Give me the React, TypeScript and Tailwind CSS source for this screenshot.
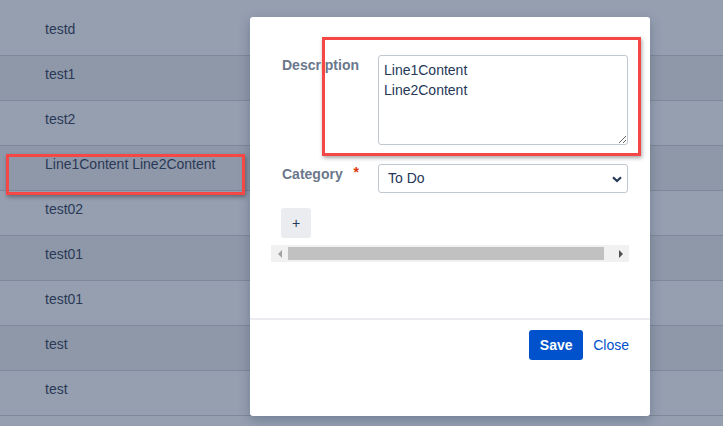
import { useState } from 'react'

const ROWS = [
  'testd',
  'test1',
  'test2',
  'Line1Content Line2Content',
  'test02',
  'test01',
  'test01',
  'test',
  'test',
]

function ListRow({ label, index }: { label: string; index: number }) {
  return (
    <div
      className={`h-[45px] border-b border-[#7f889a] pl-[45px] pt-[9px] text-[14px] leading-[18px] text-[#2a3956] ${
        index % 2 === 0 ? 'bg-[#959fb0]' : 'bg-[#8f98a9]'
      }`}
    >
      {label}
    </div>
  )
}

function Scrollbar() {
  return (
    <div className="flex h-[17px] w-[358px] bg-[#f1f1f1]">
      <div className="flex w-[17px] items-center justify-center">
        <div className="h-0 w-0 border-y-[4px] border-r-[4px] border-y-transparent border-r-[#a3a3a3]" />
      </div>
      <div className="flex flex-1 items-center pr-[8px]">
        <div className="h-[13px] w-full bg-[#c1c1c1]" />
      </div>
      <div className="flex w-[17px] items-center justify-center">
        <div className="h-0 w-0 border-y-[4px] border-l-[4px] border-y-transparent border-l-[#505050]" />
      </div>
    </div>
  )
}

function IssueModal() {
  const [description, setDescription] = useState('Line1Content\nLine2Content')
  const [category, setCategory] = useState('To Do')

  return (
    <div className="absolute left-[250px] top-[17px] flex h-[399px] w-[400px] flex-col rounded-[3px] bg-white shadow-[0_4px_12px_rgba(9,30,66,0.25)]">
      <div className="h-[301px] px-[21px] pt-[38px]">
        <div className="flex pl-[11px]">
          <label className="w-[96px] text-[14px] font-bold leading-[20px] text-[#6b778c]">Description</label>
          <textarea
            value={description}
            onChange={(e) => setDescription(e.target.value)}
            className="h-[90px] w-[250px] rounded-[3px] border border-[#c1c7d0] px-[5px] pt-[4px] text-[14px] leading-[20px] text-[#253858] outline-none"
          />
        </div>
        <div className="mt-[19px] flex pl-[11px]">
          <label className="w-[96px] text-[14px] font-bold leading-[20px] text-[#6b778c]">
            Category <span className="relative -top-[2px] ml-[7px] text-[#de350b]">*</span>
          </label>
          <div className="relative">
            <select
              value={category}
              onChange={(e) => setCategory(e.target.value)}
              className="h-[29px] w-[250px] appearance-none rounded-[3px] border border-[#c1c7d0] bg-white pl-[9px] text-[14px] text-[#253858] outline-none"
            >
              <option>To Do</option>
              <option>In Progress</option>
              <option>Done</option>
            </select>
            <svg
              className="pointer-events-none absolute right-[6px] top-[12px]"
              width="10"
              height="7"
              viewBox="0 0 10 7"
            >
              <path d="M1 1.2l4 3.8 4-3.8" fill="none" stroke="#253858" strokeWidth="2.2" />
            </svg>
          </div>
        </div>
        <div className="mt-[15px] pl-[10px]">
          <button
            type="button"
            className="flex h-[30px] w-[30px] items-center justify-center rounded-[3px] bg-[#ebecf0] text-[14px] text-[#253858]"
          >
            +
          </button>
        </div>
        <div className="mt-[7px]">
          <Scrollbar />
        </div>
      </div>
      <div className="flex flex-1 items-start justify-end gap-[10px] border-t-2 border-[#ebecf0] pr-[21px] pt-[10px]">
        <button
          type="button"
          className="h-[30px] w-[54px] rounded-[3px] bg-[#0052cc] text-[14px] font-semibold text-white"
        >
          Save
        </button>
        <button type="button" className="h-[30px] text-[14px] text-[#0052cc]">
          Close
        </button>
      </div>
    </div>
  )
}

export default function App() {
  return (
    <div
      className="relative h-[426px] w-[723px] overflow-hidden bg-[#959fb0] pt-[11px]"
      style={{ fontFamily: '"Liberation Sans", Arial, sans-serif' }}
    >
      {ROWS.map((row, i) => (
        <ListRow key={i} label={row} index={i} />
      ))}
      <IssueModal />
      <div className="pointer-events-none absolute left-[6px] top-[154px] h-[41px] w-[239px] border-[3px] border-[#f64747] shadow-[1px_2px_4px_rgba(0,0,0,0.35)]" />
      <div className="pointer-events-none absolute left-[322px] top-[37px] h-[119px] w-[319px] border-[3px] border-[#f64747] shadow-[1px_2px_4px_rgba(0,0,0,0.35)]" />
    </div>
  )
}
